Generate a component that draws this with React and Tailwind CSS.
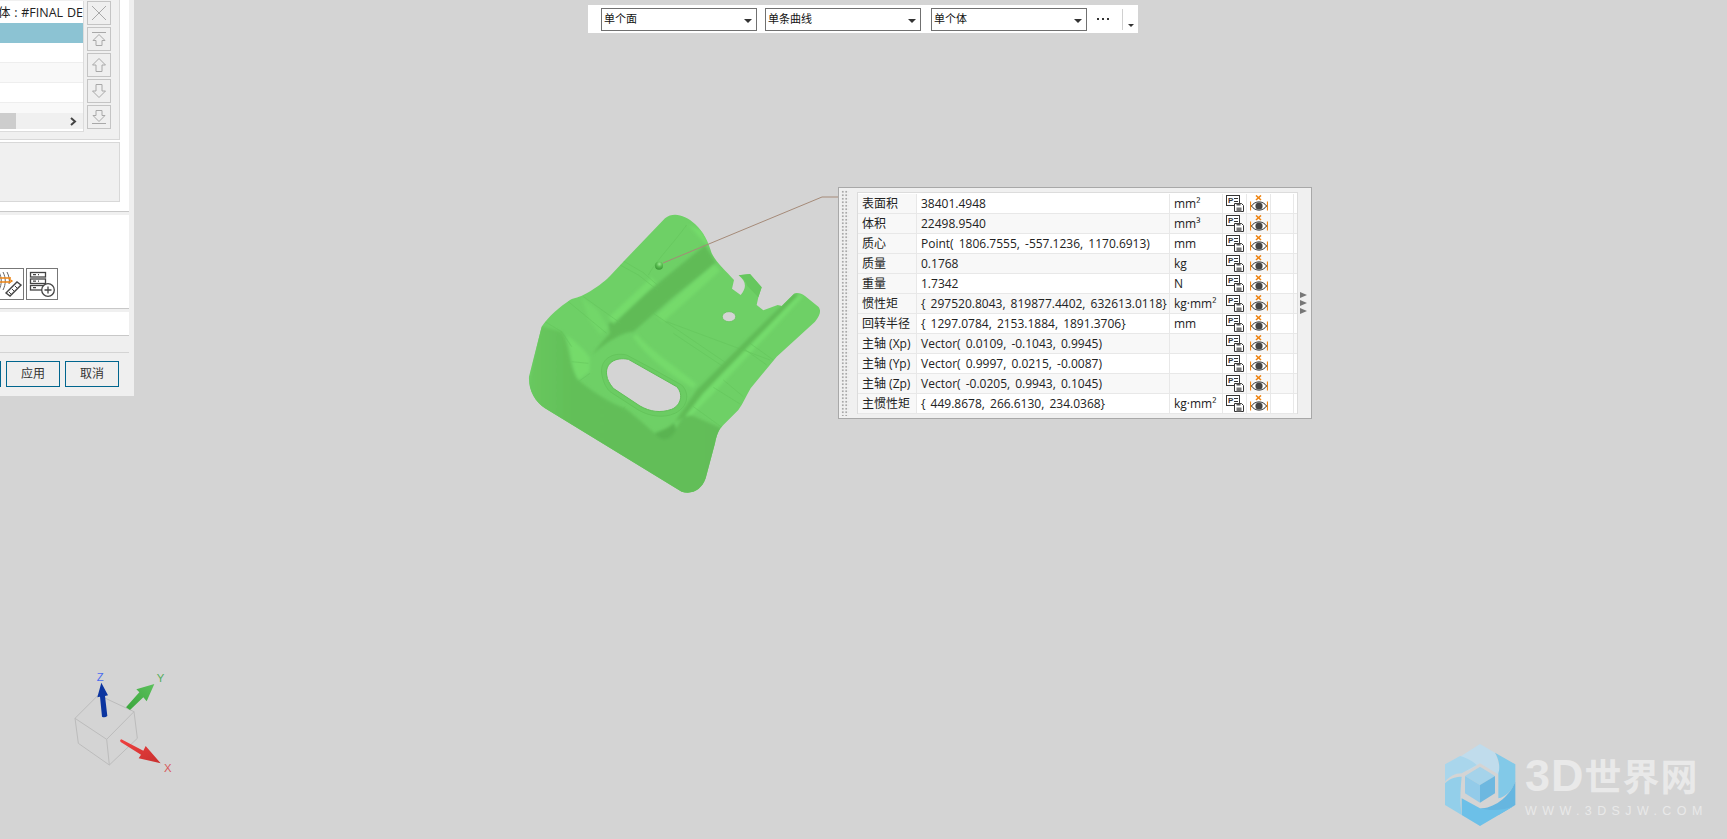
import React from "react";

const uiFont = { fontFamily: '"Open Sans", "Noto Sans CJK SC", sans-serif' };

const rows = [
  ["表面积", "38401.4948", "mm²"],
  ["体积", "22498.9540", "mm³"],
  ["质心", "Point( 1806.7555, -557.1236, 1170.6913)", "mm"],
  ["质量", "0.1768", "kg"],
  ["重量", "1.7342", "N"],
  ["惯性矩", "{ 297520.8043, 819877.4402, 632613.0118}", "kg·mm²"],
  ["回转半径", "{ 1297.0784, 2153.1884, 1891.3706}", "mm"],
  ["主轴 (Xp)", "Vector( 0.0109, -0.1043, 0.9945)", ""],
  ["主轴 (Yp)", "Vector( 0.9997, 0.0215, -0.0087)", ""],
  ["主轴 (Zp)", "Vector( -0.0205, 0.9943, 0.1045)", ""],
  ["主惯性矩", "{ 449.8678, 266.6130, 234.0368}", "kg·mm²"],
];

function ExportIcon() {
  return (
    <svg width="18" height="17" viewBox="0 0 18 17" className="block">
      <rect x="0.5" y="0.5" width="13" height="10" fill="#fff" stroke="#333" />
      <text x="2" y="8" fontSize="8" fontWeight="700" fill="#333" fontFamily="Liberation Sans">P</text>
      <path d="M8 3.500h4M8 6.500h4" stroke="#333" />
      <path d="M8.500 8.500h7l2 2v6h-9z" fill="#fff" stroke="#333" />
      <rect x="10.500" y="12.500" width="5" height="4" fill="#777" />
      <rect x="10.500" y="8.500" width="4" height="2" fill="#555" />
    </svg>
  );
}

function EyeIcon() {
  return (
    <svg width="18" height="17" viewBox="0 0 18 17" className="block">
      <path d="M6 .5l5 4.500M11 .5L6 5" stroke="#ee8412" strokeWidth="1.600" />
      <path d="M.5 6.500v9M.5 11h3M17.500 6.500v9M17.500 11h-3" stroke="#ee8412" strokeWidth="1.200" />
      <path d="M1.500 11c3.500-5.500 11.500-5.500 15 0c-3.500 5.500-11.500 5.500-15 0z" fill="#fff" stroke="#333" />
      <circle cx="9" cy="11" r="3.600" fill="#444" />
    </svg>
  );
}

function MoveButton({ children }) {
  return (
    <div className="w-[24px] h-[24px] border border-[#c4c4c4] bg-[#efefef] flex items-center justify-center">
      <svg width="18" height="18" viewBox="0 0 18 18" fill="none" stroke="#a8a8a8" strokeWidth="1">
        {children}
      </svg>
    </div>
  );
}

function ComboBox({ label }) {
  return (
    <div className="w-[156px] h-[23px] shrink-0 border border-[#707070] bg-white flex items-center justify-between pl-[2px] pr-[4px] text-[11px] text-[#111]">
      <span>{label}</span>
      <span className="w-0 h-0 border-x-[4px] border-x-transparent border-t-[4px] border-t-[#333] mt-[2px]" />
    </div>
  );
}

function SidePanel() {
  return (
    <div className="absolute left-0 top-0 w-[134px] h-[396px] bg-[#efefef] flex text-[#222]" style={uiFont}>
      <div className="w-[129px] flex flex-col">
        <div className="h-[203px] bg-white">
          <div className="h-[140px] w-[120px] bg-[#f0f0f0] border-r border-b border-[#d8d8d8] flex">
            <div className="w-[84px] h-[131px] mt-[1px] bg-white border-r border-b border-[#dcdcdc] flex flex-col overflow-hidden">
              <div className="h-[22px] shrink-0 text-[12.500px] leading-[24px] whitespace-nowrap -ml-[2px] [word-spacing:0.500px]">体 : #FINAL DE</div>
              <div className="h-[20px] shrink-0 bg-[#8cc3d3]" />
              <div className="h-[20px] shrink-0 border-b border-[#eee]" />
              <div className="h-[20px] shrink-0 bg-[#f9f9f9] border-b border-[#eee]" />
              <div className="h-[20px] shrink-0 border-b border-[#eee]" />
              <div className="h-[10px] shrink-0 bg-[#f9f9f9]" />
              <div className="h-[16px] shrink-0 bg-[#f0f0f0] flex items-center justify-between pr-[6px]">
                <div className="w-[16px] h-full bg-[#cdcdcd]" />
                <svg width="7" height="9" viewBox="0 0 7 9" fill="none" stroke="#444" strokeWidth="2">
                  <path d="M1 1l4 3.500-4 3.500" />
                </svg>
              </div>
            </div>
            <div className="ml-[3px] pt-[1px] flex flex-col gap-[2px]">
              <MoveButton>
                <path d="M2 2l14 14M16 2L2 16" />
              </MoveButton>
              <MoveButton>
                <path d="M2 2.500h14M9 4.500l6 6h-3v5H6v-5H3z" />
              </MoveButton>
              <MoveButton>
                <path d="M9 2.500l6.500 6.500h-3.500v6.500H6V9H2.500z" />
              </MoveButton>
              <MoveButton>
                <path d="M9 15.500L2.500 9H6V2.500h6V9h3.500z" />
              </MoveButton>
              <MoveButton>
                <path d="M2 15.500h14M9 13.500l-6-6h3v-5h6v5h3z" />
              </MoveButton>
            </div>
          </div>
          <div className="h-[2px]" />
          <div className="h-[60px] w-[120px] bg-[#f0f0f0] border-r border-b border-t border-[#d8d8d8]" />
        </div>
        <div className="h-[8px] bg-white" />
        <div className="h-[4px] bg-[#f0f0f0] border-t border-[#c8c8c8]" />
        <div className="h-[93px] bg-white flex items-end justify-end gap-[2px] pr-[71px] pb-[8px]">
          <div className="w-[32px] h-[32px] shrink-0 border border-[#777] bg-white overflow-hidden">
            <svg width="30" height="30" viewBox="0 0 30 30" fill="none">
              <path d="M6 3c3 6 3 12 0 18M10 3c3 6 3 12 0 18M14 3c2 4 3 8 2 12" stroke="#666" />
              <path d="M0 9h18M0 13h18M16 10l3 2-3 2" stroke="#ee8412" strokeWidth="1.300" />
              <path d="M13 24l11-11 4 3-11 11z" fill="#fff" stroke="#444" strokeWidth="1.400" />
              <path d="M16 23l2 2M19 20l2 2M22 17l2 2" stroke="#444" />
            </svg>
          </div>
          <div className="w-[32px] h-[32px] shrink-0 border border-[#777] bg-white">
            <svg width="30" height="30" viewBox="0 0 30 30" fill="none" stroke="#444" strokeWidth="1.300">
              <rect x="3.500" y="3.500" width="15" height="4.500" />
              <rect x="3.500" y="10" width="15" height="4.500" />
              <rect x="3.500" y="16.500" width="15" height="4.500" />
              <path d="M6 5.700h3M11 5.700h1M6 12.200h3M11 12.200h1M6 18.700h3" />
              <circle cx="21" cy="21" r="6.300" fill="#fff" />
              <path d="M21 17.500v7M17.500 21h7" />
            </svg>
          </div>
        </div>
        <div className="h-[4px] bg-[#f0f0f0] border-t border-[#c8c8c8]" />
        <div className="h-[23px] bg-white" />
        <div className="h-[17px] bg-[#efefef] border-t border-[#c8c8c8]" />
        <div className="flex-1 border-t border-[#d4d4d4] flex justify-end gap-[5px] pr-[10px] pt-[8px] overflow-hidden">
          <div className="w-[54px] h-[26px] shrink-0 border border-[#00658e]" />
          <div className="w-[54px] h-[26px] shrink-0 border border-[#00658e] flex items-center justify-center text-[12px] text-[#333]">应用</div>
          <div className="w-[54px] h-[26px] shrink-0 border border-[#00658e] flex items-center justify-center text-[12px] text-[#333]">取消</div>
        </div>
      </div>
      <div className="w-[5px] bg-[#efefef]" />
    </div>
  );
}

function SelectionBar() {
  return (
    <div className="absolute left-[588px] top-[5px] w-[550px] h-[28px] bg-white flex items-start pt-[3px] pl-[13px]" style={uiFont}>
      <ComboBox label="单个面" />
      <div className="w-[8px] shrink-0" />
      <ComboBox label="单条曲线" />
      <div className="w-[10px] shrink-0" />
      <ComboBox label="单个体" />
      <div className="ml-[10px] mt-[10px] flex gap-[3px]">
        <span className="w-[2px] h-[2px] bg-[#333]" />
        <span className="w-[2px] h-[2px] bg-[#333]" />
        <span className="w-[2px] h-[2px] bg-[#333]" />
      </div>
      <div className="ml-[13px] mt-[1px] w-[1px] h-[21px] bg-[#d0d0d0]" />
      <span className="ml-[5px] mt-[16px] w-0 h-0 border-x-[3px] border-x-transparent border-t-[3px] border-t-[#333]" />
    </div>
  );
}

function PropertyPanel() {
  return (
    <div className="absolute left-[838px] top-[187px] w-[474px] h-[232px] bg-[#f0f0f0] border border-[#a8a8a8] flex items-center" style={uiFont}>
      <div className="w-[18px] h-full py-[2px] pl-[2px] shrink-0">
        <div className="w-[8px] h-full bg-[radial-gradient(circle,#a8a8a8_1px,transparent_1.300px)] bg-[length:3.500px_3.500px]" />
      </div>
      <div className="w-[441px] h-[222px] shrink-0 bg-white border border-[#dcdcdc] pt-[1px]">
        {rows.map(([name, value, unit], i) => (
          <div
            key={name}
            className={`h-[20px] grid grid-cols-[59px_253px_53px_24px_24px_23px] border-b border-[#e8e8e8] text-[12px] leading-[19px] text-[#222] ${i % 2 === 1 ? "bg-[#f8f8f8]" : "bg-white"}`}
          >
            <div className="pl-[4px] border-r border-[#e8e8e8] bg-[#f8f8f8] whitespace-nowrap">{name}</div>
            <div className="pl-[4px] border-r border-[#e8e8e8] whitespace-nowrap [word-spacing:2px]">{value}</div>
            <div className="pl-[4px] border-r border-[#e8e8e8] whitespace-nowrap">{unit}</div>
            <div className="border-r border-[#e8e8e8] pl-[3px] pt-[1px]"><ExportIcon /></div>
            <div className="border-r border-[#e8e8e8] pl-[3px] pt-[1px]"><EyeIcon /></div>
            <div className="border-r border-[#e8e8e8]" />
          </div>
        ))}
      </div>
      <div className="ml-[2px] flex flex-col gap-[2px]">
        <span className="w-0 h-0 border-y-[3px] border-y-transparent border-l-[7px] border-l-[#777]" />
        <span className="w-0 h-0 border-y-[3px] border-y-transparent border-l-[7px] border-l-[#777]" />
        <span className="w-0 h-0 border-y-[3px] border-y-transparent border-l-[7px] border-l-[#777]" />
      </div>
    </div>
  );
}

// Stamped bracket shown in the graphics window, coordinates at 3 units per pixel
function BracketModel() {
  const outline =
    "M465 55C490 35 525 45 555 72C580 95 595 125 605 160C620 190 650 215 672 240L666 266L692 285C708 265 712 248 686 226L720 222L755 262L745 292L740 315L760 331L803 315L815 318L852 281C860 276 875 280 885 288L925 320C935 332 930 345 915 365L800 470L722 565C710 585 700 610 685 630L640 675C625 690 620 705 615 730L587 835C575 870 545 885 515 875L105 625C75 605 55 570 57 530L95 380C115 350 150 320 180 300C195 292 205 295 230 280C260 262 280 248 300 228L340 185Z";
  return (
    <svg className="absolute left-[510px] top-[200px]" width="330" height="310" viewBox="0 0 990 930" fill="none">
      <defs>
        <linearGradient id="wall" x1="0" y1="0" x2="1" y2="0">
          <stop offset="0" stopColor="#69c95f" />
          <stop offset="0.25" stopColor="#62bf58" />
          <stop offset="1" stopColor="#62bd58" />
        </linearGradient>
        <radialGradient id="ball" cx="0.55" cy="0.3" r="0.7">
          <stop offset="0" stopColor="#9aea90" />
          <stop offset="0.5" stopColor="#58bc4f" />
          <stop offset="1" stopColor="#3a9636" />
        </radialGradient>
        <clipPath id="partClip">
          <path d={outline} />
        </clipPath>
        <filter id="soft" x="-5%" y="-5%" width="110%" height="110%">
          <feGaussianBlur stdDeviation="5" />
        </filter>
      </defs>
      <path d={outline} fill="#6ed066" />
      <g clipPath="url(#partClip)">
        <g filter="url(#soft)">
          {/* lower wall */}
          <path d="M90 378L155 395C178 425 175 500 205 540C240 570 300 610 345 625C385 655 420 690 445 708C470 725 490 700 510 665L530 640L635 685L600 900L480 900L40 640Z" fill="url(#wall)" />
          {/* trough along the upper flange */}
          <path d="M245 465C265 440 280 420 300 400L295 372L430 262L585 135L618 188L490 290L370 395C340 395 290 425 245 465Z" fill="#60bb57" />
          <path d="M296 352L425 232L440 250L310 372Z" fill="#74db6b" />
          <path d="M535 75L575 90L600 140L580 125Z" fill="#74db6b" />
          <path d="M440 345L612 192L630 212L460 365Z" fill="#74da6b" />
          {/* corner fillets */}
          <path d="M170 405C195 425 225 450 240 475L238 515L205 540C185 510 185 450 170 405Z" fill="#74db6b" />
          <path d="M215 292L262 330L295 385L270 405L235 355Z" fill="#72d769" />
          {/* rib beside the opening */}
          <path d="M380 402C420 450 490 495 560 552L548 565C470 515 410 470 368 410Z" fill="#74da6b" />
          {/* long rib toward the far flange */}
          <path d="M495 665L560 570L700 430L850 282L866 284L715 440L580 580L525 650Z" fill="#60bc57" />
          <path d="M525 650L580 580L715 440L866 284L880 288L735 445L600 590L545 645Z" fill="#75dc6c" />
          <path d="M435 700C450 690 470 690 492 668L498 690C480 725 450 725 435 700Z" fill="#5ab451" />
        </g>
        {/* face boundaries */}
        <g stroke="#63c25b" strokeWidth="1.500">
          <path d="M325 192L385 225L445 272M340 183L400 218L450 262M220 290L335 372M175 305L290 400M105 365L155 395L185 440M185 485L235 490M205 545L240 520" />
          <path d="M530 75C490 130 440 180 415 225M430 340L650 490M470 365L780 480M490 400L640 500M640 540L700 590M610 562L690 612M550 620L640 685M720 430L790 480M700 445L770 495M345 620L330 640" />
        </g>
      </g>
      {/* stamped opening */}
      <path d="M275 520C270 480 305 455 350 465L425 505L515 555C540 580 535 620 495 640C460 655 420 650 385 630L300 575C285 560 278 540 275 520Z" fill="#6bcc63" stroke="#60bf58" strokeWidth="2" />
      <path d="M290 525C285 490 315 470 355 478L500 560C520 580 515 615 485 628C450 640 420 635 390 618L310 565C298 550 292 540 290 525Z" fill="#d4d4d4" stroke="#5fc056" strokeWidth="3" />
      <ellipse cx="657" cy="350" rx="20" ry="15" fill="#d4d4d4" stroke="#5fc056" strokeWidth="2" />
      {/* clip tab */}
      <path d="M686 226L720 222L755 262L745 292L712 258C708 245 700 235 686 226Z" fill="#66c75e" />
      <circle cx="447" cy="197" r="12" fill="url(#ball)" />
    </svg>
  );
}

function ViewTriad() {
  return (
    <svg className="absolute left-[60px] top-[660px]" width="130" height="120" viewBox="0 0 390 360" fill="none">
      <defs>
        <linearGradient id="xArrow" x1="0" y1="0" x2="1" y2="1">
          <stop offset="0" stopColor="#f0403f" />
          <stop offset="1" stopColor="#c8302f" />
        </linearGradient>
        <linearGradient id="yArrow" x1="0" y1="1" x2="1" y2="0">
          <stop offset="0" stopColor="#3aa63c" />
          <stop offset="1" stopColor="#5cc05c" />
        </linearGradient>
      </defs>
      <g stroke="#bcbcbc" strokeWidth="3">
        <path d="M115 105L45 175L140 238L222 155ZM45 175L55 250L148 315L140 238M148 315L232 235L222 155" />
      </g>
      <path d="M126 170L120 110L112 112L124 68L144 106L135 108L142 168Q134 174 126 170Z" fill="#0b35a0" />
      <path d="M198 142L238 97L229 88L283 72L260 124L250 112L210 150Z" fill="url(#yArrow)" />
      <path d="M184 238L250 272L257 258L302 310L236 295L243 284L182 246Q178 240 184 238Z" fill="url(#xArrow)" />
      <text x="110" y="62" fontSize="34" fill="#4a6cf0" fontFamily="Liberation Sans">Z</text>
      <text x="290" y="66" fontSize="34" fill="#55ad5b" fontFamily="Liberation Sans">Y</text>
      <text x="312" y="337" fontSize="34" fill="#d85a5a" fontFamily="Liberation Sans">X</text>
    </svg>
  );
}

function SiteMark() {
  return (
    <div className="absolute left-[1445px] top-[744px] flex items-start">
      <svg width="74" height="84" viewBox="45 42 222 252">
        <path d="M90 80L150 42L195 68C205 90 210 115 208 135L150 100L110 125C125 105 115 85 90 80Z" fill="#c0dcec" />
        <path d="M195 68L256 103V155C245 185 225 200 205 205V130C212 110 205 85 195 68Z" fill="#82c9e8" />
        <path d="M256 155V225L205 255L150 235C190 235 235 205 256 155Z" fill="#66b6e0" />
        <path d="M95 205L150 235C185 245 225 240 252 228L150 288L95 255Z" fill="#6cc0e8" />
        <path d="M45 160V225L95 255C90 215 90 190 95 140C75 140 55 148 45 160Z" fill="#93cfea" />
        <path d="M45 103L90 78C115 85 130 95 140 105L95 130C75 130 58 140 45 155Z" fill="#a9d6ec" />
        <path d="M150 110L195 138L150 165L105 138Z" fill="#a5d3ea" />
        <path d="M105 138L150 165V218L105 190Z" fill="#93cbe9" />
        <path d="M195 138L150 165V218L195 190Z" fill="#6db8e0" />
      </svg>
      <div className="ml-[6px] pt-[11px] flex flex-col text-[#e9e9e9] font-bold">
        <div
          className="text-[37px] leading-[42px] tracking-[1px] whitespace-nowrap"
          style={{ fontFamily: '"Liberation Sans", "Noto Sans CJK SC", sans-serif' }}
        >
          <span className="text-[45px] tracking-[1px]">3D</span>世界网
        </div>
        <div
          className="mt-[4px] text-[12.500px] leading-[14px] tracking-[5.400px] whitespace-nowrap font-normal"
          style={{ fontFamily: '"Liberation Sans", sans-serif' }}
        >
          WWW.3DSJW.COM
        </div>
      </div>
    </div>
  );
}

export default function App() {
  return (
    <div className="relative w-[1727px] h-[839px] bg-[#d4d4d4] overflow-hidden">
      <SidePanel />
      <SelectionBar />
      <BracketModel />
      {/* leader from the picked point up to the property panel */}
      <svg className="absolute left-[660px] top-[190px]" width="180" height="80" viewBox="0 0 180 80" fill="none">
        <path d="M3 73L162 7H178" stroke="#a58a78" strokeWidth="1" />
      </svg>
      <PropertyPanel />
      <ViewTriad />
      <SiteMark />
    </div>
  );
}
